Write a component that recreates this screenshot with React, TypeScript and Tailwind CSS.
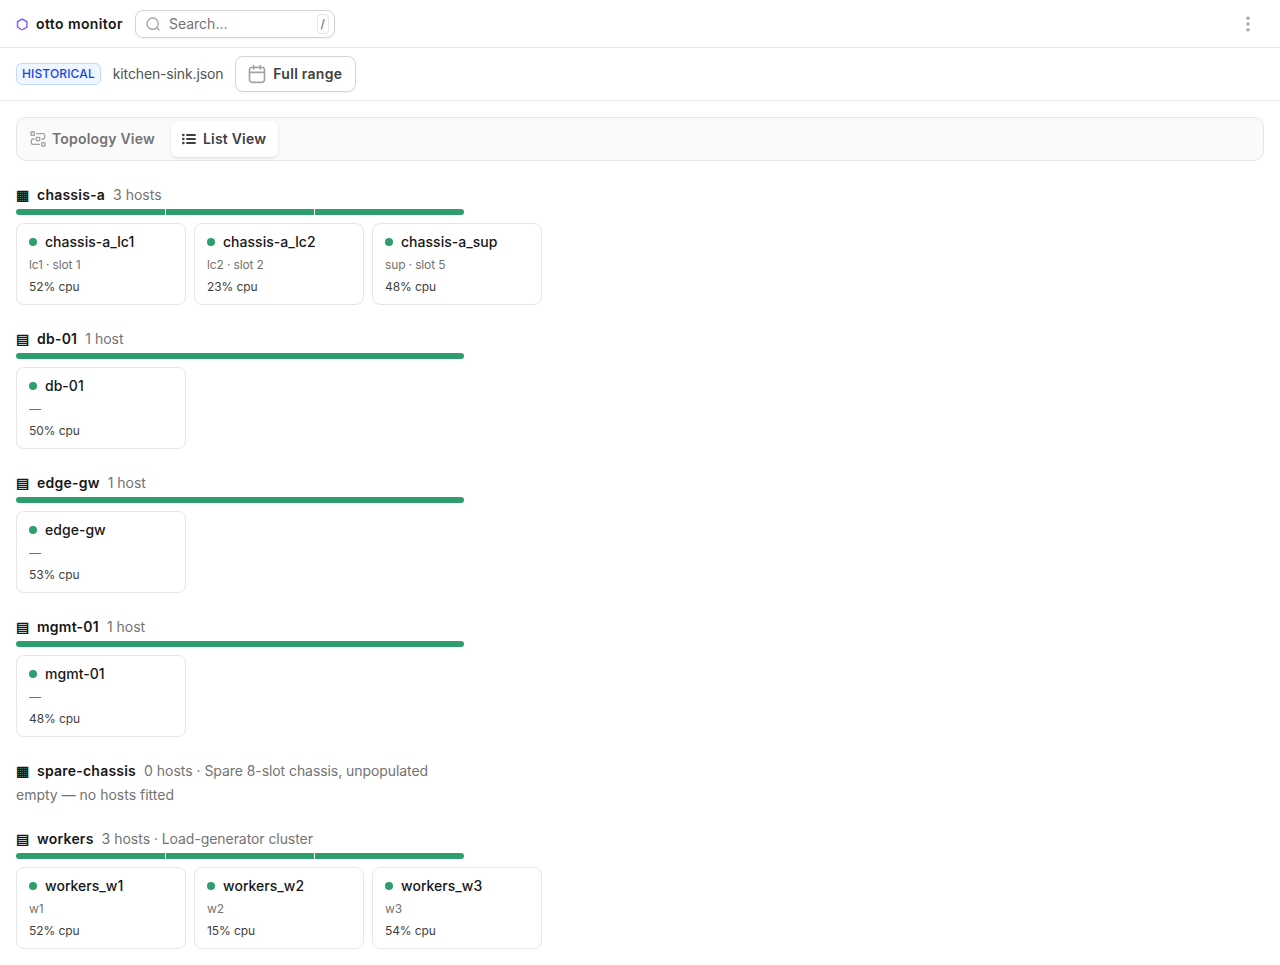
import React, { useState } from 'react';

type Host = {
  name: string;
  detail: string;
  cpu: number;
};

type HostGroup = {
  name: string;
  chassis?: boolean;
  note?: string;
  hosts: Host[];
};

type View = 'topology' | 'list';

const groups: HostGroup[] = [
  {
    name: 'chassis-a',
    chassis: true,
    hosts: [
      { name: 'chassis-a_lc1', detail: 'lc1 · slot 1', cpu: 52 },
      { name: 'chassis-a_lc2', detail: 'lc2 · slot 2', cpu: 23 },
      { name: 'chassis-a_sup', detail: 'sup · slot 5', cpu: 48 },
    ],
  },
  { name: 'db-01', hosts: [{ name: 'db-01', detail: '—', cpu: 50 }] },
  { name: 'edge-gw', hosts: [{ name: 'edge-gw', detail: '—', cpu: 53 }] },
  { name: 'mgmt-01', hosts: [{ name: 'mgmt-01', detail: '—', cpu: 48 }] },
  {
    name: 'spare-chassis',
    chassis: true,
    note: 'Spare 8-slot chassis, unpopulated',
    hosts: [],
  },
  {
    name: 'workers',
    note: 'Load-generator cluster',
    hosts: [
      { name: 'workers_w1', detail: 'w1', cpu: 52 },
      { name: 'workers_w2', detail: 'w2', cpu: 15 },
      { name: 'workers_w3', detail: 'w3', cpu: 54 },
    ],
  },
];

type IconProps = {
  className?: string;
  strokeWidth?: number;
  children: React.ReactNode;
};

const Icon = ({ className, strokeWidth = 2, children }: IconProps) => (
  <svg
    viewBox="0 0 24 24"
    fill="none"
    stroke="currentColor"
    strokeWidth={strokeWidth}
    strokeLinecap="round"
    strokeLinejoin="round"
    className={className}
    aria-hidden="true"
  >
    {children}
  </svg>
);

const Header = () => (
  <header className="flex h-12 items-center justify-between border-b border-[#e5e5e5] px-4">
    <div className="flex items-center gap-3">
      <div className="flex items-center gap-2 text-sm font-semibold text-[#171717]">
        <span className="text-[#7c5cff]">⬡</span>
        <span className="tracking-[0.4px]">otto monitor</span>
      </div>
      <div className="flex h-7 w-50 items-center rounded-lg border border-[#d4d4d4] pr-[5px] pl-[9px] shadow-xs">
        <Icon className="size-4 text-[#a3a3a3]">
          <path d="m21 21-3.5-3.5m2.5-6a8.5 8.5 0 1 1-17 0 8.5 8.5 0 0 1 17 0Z" />
        </Icon>
        <input
          placeholder="Search…"
          className="ml-2 min-w-0 flex-1 text-sm outline-none placeholder:text-[#737373]"
        />
        <kbd className="flex h-5 items-center rounded border border-[#e5e5e5] px-[3px] font-[Inter] text-xs font-medium text-[#737373]">
          /
        </kbd>
      </div>
    </div>
    <button className="mr-1.5 text-[#a3a3a3]" aria-label="Open menu">
      <Icon className="size-5">
        <circle cx="12" cy="5" r="1" />
        <circle cx="12" cy="12" r="1" />
        <circle cx="12" cy="19" r="1" />
      </Icon>
    </button>
  </header>
);

const SourceBar = () => (
  <div className="flex items-center gap-3 border-b border-[#e5e5e5] px-4 py-2">
    <span className="rounded-md border border-blue-200 bg-blue-50 px-[5px] py-px text-xs leading-[18px] font-medium tracking-[0.13px] text-blue-700">
      HISTORICAL
    </span>
    <span className="text-sm tracking-[-0.14px] text-[#525252]">kitchen-sink.json</span>
    <button className="flex h-9 items-center gap-1.5 rounded-lg border border-[#d4d4d4] pr-[12.5px] pl-[11px] text-sm font-semibold tracking-[0.27px] text-[#404040] shadow-xs">
      <Icon className="size-5 text-[#a3a3a3]">
        <path d="M21 10H3m13-8v4M8 2v4m-.2 16h8.4c1.68 0 2.52 0 3.162-.327a3 3 0 0 0 1.311-1.311C21 19.72 21 18.88 21 17.2V8.8c0-1.68 0-2.52-.327-3.162a3 3 0 0 0-1.311-1.311C18.72 4 17.88 4 16.2 4H7.8c-1.68 0-2.52 0-3.162.327a3 3 0 0 0-1.311 1.311C3 6.28 3 7.12 3 8.8v8.4c0 1.68 0 2.52.327 3.162a3 3 0 0 0 1.311 1.311C5.28 22 6.12 22 7.8 22Z" />
      </Icon>
      <span>Full range</span>
    </button>
  </div>
);

type TabsProps = {
  view: View;
  onChange: (view: View) => void;
};

const ViewTabs = ({ view, onChange }: TabsProps) => {
  const tabClass = (active: boolean) =>
    `flex h-9 items-center gap-1.5 rounded-md text-sm font-semibold tracking-[0.2px] ${
      active ? 'bg-white text-[#404040] shadow-sm' : 'text-[#737373]'
    }`;

  return (
    <div className="flex h-11 items-center gap-1 rounded-[10px] border border-[#e5e5e5] bg-[#fafafa] px-[3px]">
      <button className={tabClass(view === 'topology')} onClick={() => onChange('topology')}>
        <Icon className="ml-2.5 size-4 text-[#a3a3a3]">
          <rect x="1.5" y="1.5" width="5" height="5" rx="0.6" />
          <rect x="9.5" y="9.5" width="5" height="5" rx="0.6" />
          <rect x="17.5" y="17.5" width="5" height="5" rx="0.6" />
          <path d="M10 4h9.5a2.5 2.5 0 0 1 2.5 2.5v3a2.5 2.5 0 0 1-2.5 2.5H18M6 12H4.5A2.5 2.5 0 0 0 2 14.5v3A2.5 2.5 0 0 0 4.5 20H14" />
        </Icon>
        <span className="mr-3">Topology View</span>
      </button>
      <button className={tabClass(view === 'list')} onClick={() => onChange('list')}>
        <Icon className="ml-2.5 size-4" strokeWidth={2.8}>
          <path d="M21 12H9m12-6H9m12 12H9" />
          <path d="M3.5 12h.01M3.5 6h.01M3.5 18h.01" strokeWidth={4} />
        </Icon>
        <span className="mr-3">List View</span>
      </button>
    </div>
  );
};

const HostCard = ({ host }: { host: Host }) => (
  <div className="flex w-[170px] flex-col gap-1 rounded-lg border border-[#e5e5e5] px-3 py-2 text-xs leading-[18px]">
    <div className="flex items-center gap-2 text-sm font-medium text-[#171717]">
      <span className="size-2 rounded-full bg-[#2e9e6e]" />
      <span className="tracking-[0.03px]">{host.name}</span>
    </div>
    <div className="tracking-[-0.14px] text-[#737373]">{host.detail}</div>
    <div className="tracking-[-0.1px] text-[#404040]">{host.cpu}% cpu</div>
  </div>
);

const GroupSection = ({ group }: { group: HostGroup }) => {
  const count = group.hosts.length;

  return (
    <section className="flex flex-col">
      <h2 className="flex items-baseline gap-2 text-sm">
        <span className="font-semibold text-[#171717]">{group.chassis ? '▦' : '▤'}</span>
        <span className="font-semibold tracking-[0.22px] text-[#171717]">{group.name}</span>
        <span className="text-[#737373]">
          {count} {count === 1 ? 'host' : 'hosts'}
          {group.note && <span className="tracking-[-0.07px]"> · {group.note}</span>}
        </span>
      </h2>
      {count === 0 ? (
        <p className="mt-1 text-sm text-[#737373]">empty — no hosts fitted</p>
      ) : (
        <>
          <div className="mt-1 flex h-1.5 w-md gap-px overflow-hidden rounded-full">
            {group.hosts.map((host) => (
              <span key={host.name} className="flex-1 bg-[#2e9e6e]" />
            ))}
          </div>
          <div className="mt-2 flex flex-wrap gap-2">
            {group.hosts.map((host) => (
              <HostCard key={host.name} host={host} />
            ))}
          </div>
        </>
      )}
    </section>
  );
};

const App = () => {
  const [view, setView] = useState<View>('list');

  return (
    <div className="min-h-screen bg-white font-[Inter,sans-serif]">
      <Header />
      <SourceBar />
      <main className="flex flex-col gap-6 p-4">
        <ViewTabs view={view} onChange={setView} />
        {view === 'list' && groups.map((group) => <GroupSection key={group.name} group={group} />)}
      </main>
    </div>
  );
};

export default App;
